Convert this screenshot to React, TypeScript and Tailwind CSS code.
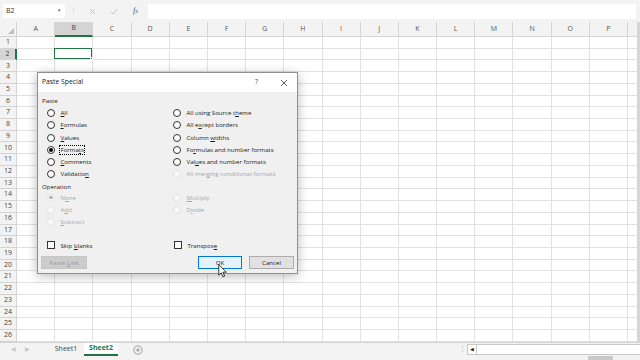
import type { ReactNode } from "react";

const COLS = ["A", "B", "C", "D", "E", "F", "G", "H", "I", "J", "K", "L", "M", "N", "O", "P", ""];
const ROWS = Array.from({ length: 26 }, (_, i) => i + 1);

function Radio({ checked = false, disabled = false }: { checked?: boolean; disabled?: boolean }) {
  return (
    <span
      className={`flex h-[8px] w-[8px] shrink-0 items-center justify-center rounded-full border ${
        disabled ? "border-[#e2e2e2] bg-[#f8f8f8]" : "border-[#333] bg-white"
      }`}
    >
      {checked && <span className={`h-[3.5px] w-[3.5px] rounded-full ${disabled ? "bg-[#b5b5b5]" : "bg-black"}`} />}
    </span>
  );
}

function Option({
  children,
  checked,
  disabled,
  focus,
}: {
  children: ReactNode;
  checked?: boolean;
  disabled?: boolean;
  focus?: boolean;
}) {
  return (
    <div className="flex h-[12.25px] items-center gap-[4px]">
      <Radio checked={checked} disabled={disabled} />
      <span
        className={`whitespace-nowrap leading-[8px] ${disabled ? "text-[#a8a8a8]" : "text-[#1a1a1a]"} ${
          focus ? "border border-dotted border-black px-[0.5px]" : "border border-transparent px-[0.5px]"
        }`}
      >
        {children}
      </span>
    </div>
  );
}

function Check({ children }: { children: ReactNode }) {
  return (
    <div className="flex h-[12px] items-center gap-[4px]">
      <span className="h-[8px] w-[8px] shrink-0 border border-[#333] bg-white" />
      <span className="whitespace-nowrap border border-transparent px-[0.5px] text-[#1a1a1a]">{children}</span>
    </div>
  );
}

function Toolbar() {
  return (
    <div className="flex h-[22px] shrink-0 items-center bg-[#f3f3f3]">
      <div className="ml-[3px] flex h-[14px] w-[62px] items-center justify-between bg-white pl-[3px] pr-[4px] text-[7px] text-[#333]">
        <span>B2</span>
        <span className="text-[5px] text-[#666]">▾</span>
      </div>
      <div className="flex w-[17px] justify-center text-[7px] text-[#c4c4c4]">⋮</div>
      <div className="flex w-[21px] justify-center">
        <svg width="7" height="7" viewBox="0 0 7 7">
          <path d="M1 1L6 6M6 1L1 6" stroke="#b8b8b8" strokeWidth="0.8" />
        </svg>
      </div>
      <div className="flex w-[21px] justify-center">
        <svg width="8" height="7" viewBox="0 0 8 7">
          <path d="M1 4L3 6L7 1" stroke="#b8b8b8" strokeWidth="0.8" fill="none" />
        </svg>
      </div>
      <div className="flex w-[21px] justify-center pl-[2px] font-['Liberation_Serif',serif] text-[8px] italic text-[#555]">
        <span>
          f<span className="text-[6px]">x</span>
        </span>
      </div>
      <div className="ml-[3px] mr-[4px] h-[15px] flex-1 bg-white" />
    </div>
  );
}

function Grid() {
  return (
    <div className="flex min-h-0 flex-1">
      <div className="flex flex-1 flex-col overflow-hidden">
        <div className="flex h-[15px] shrink-0">
          <div className="relative w-[17px] shrink-0 border-b border-r border-[#d4d4d4] bg-[#f3f3f3]">
            <svg className="absolute bottom-[2px] right-[2px]" width="6" height="6" viewBox="0 0 6 6">
              <path d="M6 0V6H0Z" fill="#bdbdbd" />
            </svg>
          </div>
          {COLS.map((c, i) => (
            <div
              key={i}
              className={`flex w-[38.2px] shrink-0 items-center justify-center border-r border-[#d4d4d4] text-[7px] ${
                c === "B" ? "border-b-2 border-b-[#217346] bg-[#d4d4d4] text-[#444]" : "border-b bg-[#f3f3f3] text-[#555]"
              }`}
            >
              {c}
            </div>
          ))}
        </div>
        {ROWS.map((r) => (
          <div key={r} className="flex h-[11.73px] shrink-0">
            <div
              className={`flex w-[17px] shrink-0 items-center justify-center border-b text-[7px] text-[#444] ${
                r === 2 ? "border-r-2 border-b-[#d4d4d4] border-r-[#217346] bg-[#d4d4d4]" : "border-r border-[#d4d4d4] bg-[#f3f3f3]"
              }`}
            >
              {r}
            </div>
            {COLS.map((c, i) => (
              <div key={i} className="relative w-[38.2px] shrink-0 border-b border-r border-[#e1e1e1]">
                {r === 2 && c === "B" && (
                  <div className="absolute -left-px -top-px bottom-0 right-0 border-[1.5px] border-[#217346]">
                    <span className="absolute -bottom-[2px] -right-[2px] h-[3px] w-[3px] border border-white bg-[#217346]" />
                  </div>
                )}
              </div>
            ))}
          </div>
        ))}
      </div>
      <div className="w-[3px] shrink-0 bg-[#d6d6d6]" />
    </div>
  );
}

function TabBar() {
  return (
    <div className="flex h-[14px] shrink-0 items-stretch border-t border-[#d4d4d4] bg-[#f3f3f3] text-[7px]">
      <div className="flex w-[48px] items-center gap-[9px] pl-[11px] text-[6px] text-[#c6c6c6]">
        <span>◀</span>
        <span>▶</span>
      </div>
      <div className="flex w-[36px] items-center justify-center text-[#444]">Sheet1</div>
      <div className="flex w-[34px] items-center justify-center border-b-2 border-[#217346] bg-white font-bold text-[#217346]">
        Sheet2
      </div>
      <div className="flex w-[40px] items-center justify-center">
        <svg width="10" height="10" viewBox="0 0 10 10">
          <circle cx="5" cy="5" r="4.2" fill="none" stroke="#8a8a8a" strokeWidth="0.8" />
          <path d="M5 2.8V7.2M2.8 5H7.2" stroke="#8a8a8a" strokeWidth="0.8" />
        </svg>
      </div>
      <div className="flex-1" />
      <div className="flex w-[9px] items-center justify-center text-[#b0b0b0]">⋮</div>
      <div className="my-[1px] flex w-[10px] items-center justify-center border border-[#c8c8c8] bg-white text-[5px] text-[#222]">
        ◀
      </div>
      <div className="my-[1px] w-[163px] border-y border-[#c8c8c8] bg-white" />
    </div>
  );
}

function Dialog() {
  return (
    <div className="absolute left-[37px] top-[72px] flex h-[202px] w-[261px] flex-col border border-[#8f8f8f] bg-[#f0f0f0] text-[6.1px] shadow-[0_2px_10px_rgba(0,0,0,0.28)]">
      <div className="flex h-[19px] shrink-0 items-center bg-white pl-[4px] pr-[9px] text-[6.8px] text-[#1a1a1a]">
        <span className="flex-1">Paste Special</span>
        <span className="mr-[22px] text-[#444]">?</span>
        <svg width="8" height="8" viewBox="0 0 8 8">
          <path d="M1 1L7 7M7 1L1 7" stroke="#333" strokeWidth="0.8" />
        </svg>
      </div>
      <div className="flex flex-1 flex-col px-[3px]">
        <div className="mt-[4px] h-[9px] pl-[1px] leading-[9px] text-[#1a1a1a]">Paste</div>
        <div className="mt-[2px] grid grid-cols-[126px_1fr] pl-[6px]">
          <Option>
            <u>A</u>ll
          </Option>
          <Option>
            All using Source t<u>h</u>eme
          </Option>
          <Option>
            <u>F</u>ormulas
          </Option>
          <Option>
            All e<u>x</u>cept borders
          </Option>
          <Option>
            <u>V</u>alues
          </Option>
          <Option>
            Column <u>w</u>idths
          </Option>
          <Option checked focus>
            Forma<u>t</u>s
          </Option>
          <Option>
            Fo<u>r</u>mulas and number formats
          </Option>
          <Option>
            <u>C</u>omments
          </Option>
          <Option>
            Val<u>u</u>es and number formats
          </Option>
          <Option>
            Validatio<u>n</u>
          </Option>
          <Option disabled>
            All mer<u>g</u>ing conditional formats
          </Option>
        </div>
        <div className="mt-[1px] h-[9px] pl-[1px] leading-[9px] text-[#1a1a1a]">Operation</div>
        <div className="mt-[1px] grid grid-cols-[126px_1fr] pl-[6px]">
          <Option checked disabled>
            N<u>o</u>ne
          </Option>
          <Option disabled>
            <u>M</u>ultiply
          </Option>
          <Option disabled>
            A<u>d</u>d
          </Option>
          <Option disabled>
            D<u>i</u>vide
          </Option>
          <Option disabled>
            <u>S</u>ubtract
          </Option>
          <div />
        </div>
        <div className="mt-[11px] grid grid-cols-[127px_1fr] pl-[6px]">
          <Check>
            Skip <u>b</u>lanks
          </Check>
          <Check>
            Transpos<u>e</u>
          </Check>
        </div>
        <div className="mt-[5px] flex items-center">
          <div className="flex h-[13px] w-[46px] items-center justify-center border border-[#c6c6c6] bg-[#cccccc] text-[#9a9a9a]">
            <span>
              Paste <u>L</u>ink
            </span>
          </div>
          <div className="flex-1" />
          <div className="flex h-[13px] w-[44px] items-center justify-center border border-[#0078d7] bg-[#e5f1fb] text-[#1a1a1a]">
            OK
          </div>
          <div className="ml-[7px] flex h-[13px] w-[45px] items-center justify-center border border-[#adadad] bg-[#e1e1e1] text-[#1a1a1a]">
            Cancel
          </div>
        </div>
      </div>
    </div>
  );
}

export default function App() {
  return (
    <div className="relative flex h-[360px] w-[640px] flex-col overflow-hidden bg-white font-['Open_Sans','Noto_Sans',sans-serif]">
      <Toolbar />
      <Grid />
      <TabBar />
      <div className="flex h-[4px] shrink-0 bg-[#f3f3f3]">
        <div className="flex-1" />
        <div className="mr-[27px] w-[25px] bg-[#c9c9c9]" />
      </div>
      <Dialog />
      <svg className="absolute left-[218px] top-[264px]" width="9" height="14" viewBox="0 0 9 15">
        <path d="M0.5 0.5V12L3.2 9.5L5 13.8L6.8 13L5 8.8H8.5Z" fill="white" stroke="black" strokeWidth="0.8" strokeLinejoin="round" />
      </svg>
    </div>
  );
}
